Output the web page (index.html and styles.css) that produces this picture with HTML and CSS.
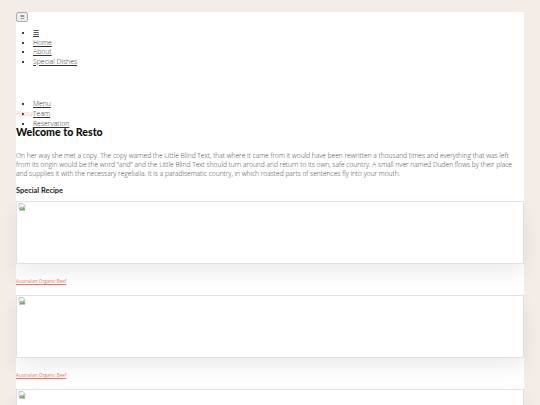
FILE: index.html
```html
<!DOCTYPE html>
<html lang="en">
  <head>
    <meta charset="UTF-8" />
    <meta name="viewport" content="width=device-width, initial-scale=1.0" />
    <title>Resto</title>
    <link rel="stylesheet" href="styles.css">
  </head>
  <body>
    <div class="container">
      <button class="toggler" type="button">&#9776;</button>
      <ul class="nav">
        <li><a href="#">&#9776;</a></li>
        <li><a href="#">Home</a></li>
        <li><a href="#">About</a></li>
        <li><a href="#">Special Dishes</a></li>
      </ul>

      <div class="nav-lower">
        <ul class="nav">
          <li><a href="#">Menu</a></li>
          <li><a href="#">Team</a></li>
          <li><a href="#">Reservation</a></li>
        </ul>
        <span class="crumb">About</span>
      </div>

      <h1>Welcome to Resto</h1>
      <p class="intro">
        On her way she met a copy. The copy warned the Little Blind Text, that where it came from it would have been rewritten a thousand times and everything that was left from its origin would be the word "and" and the Little Blind Text should turn around and return to its own, safe country. A small river named Duden flows by their place and supplies it with the necessary regelialia. It is a paradisematic country, in which roasted parts of sentences fly into your mouth.
      </p>

      <h2>Special Recipe</h2>

      <div class="recipe">
        <div class="photo">
          <svg class="broken" width="8" height="8" viewBox="0 0 16 16">
            <path d="M2 1h8l4 4v4l-3 -2 -3 3 -2 -2 -4 4z" fill="#f1f1f1" stroke="#9a9a9a" stroke-width="1"/>
            <path d="M2 14l4 -4 2 2 3 -3 3 2v4H2z" fill="#6fae5b"/>
            <path d="M4 12l3 -3 2 2 4 -4" fill="none" stroke="#4a7fc0" stroke-width="1"/>
          </svg>
        </div>
        <a class="dish" href="#">Australian Organic Beef</a>
      </div>

      <div class="recipe">
        <div class="photo">
          <svg class="broken" width="8" height="8" viewBox="0 0 16 16">
            <path d="M2 1h8l4 4v4l-3 -2 -3 3 -2 -2 -4 4z" fill="#f1f1f1" stroke="#9a9a9a" stroke-width="1"/>
            <path d="M2 14l4 -4 2 2 3 -3 3 2v4H2z" fill="#6fae5b"/>
            <path d="M4 12l3 -3 2 2 4 -4" fill="none" stroke="#4a7fc0" stroke-width="1"/>
          </svg>
        </div>
        <a class="dish" href="#">Australian Organic Beef</a>
      </div>

      <div class="recipe">
        <div class="photo">
          <svg class="broken" width="8" height="8" viewBox="0 0 16 16">
            <path d="M2 1h8l4 4v4l-3 -2 -3 3 -2 -2 -4 4z" fill="#f1f1f1" stroke="#9a9a9a" stroke-width="1"/>
            <path d="M2 14l4 -4 2 2 3 -3 3 2v4H2z" fill="#6fae5b"/>
            <path d="M4 12l3 -3 2 2 4 -4" fill="none" stroke="#4a7fc0" stroke-width="1"/>
          </svg>
        </div>
      </div>
    </div>
  </body>
</html>
```

FILE: styles.css
```css
body {
  font-family: "Open Sans", sans-serif;
  background-color: #f4ece7;
  margin: 0;
  padding: 0;
  overflow: hidden;
}

.container {
  margin: 12px 16px 0;
  background-color: #fff;
  min-height: 420px;
}

.toggler {
  display: block;
  width: 12px;
  height: 10px;
  margin: 1px 0 0;
  padding: 0;
  font-size: 5px;
  line-height: 8px;
  color: #555;
  background-color: #efefef;
  border: 1px solid #aaa;
  border-radius: 2px;
}

.nav {
  margin: 6px 0 0;
  padding-left: 17px;
  font-size: 6.9px;
  font-weight: 300;
  line-height: 9.6px;
}

.nav a {
  color: #333;
}

.nav-lower {
  position: relative;
  margin-top: 33px;
}

.nav-lower .nav {
  margin: 0;
}

.crumb {
  position: absolute;
  left: 0;
  top: 10px;
  font-size: 6.9px;
  font-weight: 300;
  line-height: 9px;
  color: #f0968a;
}

h1 {
  font-family: "Lato", sans-serif;
  font-weight: 900;
  font-size: 10.6px;
  color: #111;
  margin: -2px 0 0;
  line-height: 13px;
}

.intro {
  margin: 12px 0 0;
  padding-right: 10px;
  font-size: 6.65px;
  font-weight: 300;
  line-height: 9.1px;
  color: #444;
}

h2 {
  font-family: "Lato", sans-serif;
  font-weight: 700;
  font-size: 7.4px;
  color: #222;
  margin: 8px 0 0;
  line-height: 10px;
}

.recipe {
  margin-top: 5px;
}

.recipe + .recipe {
  margin-top: 11px;
}

.photo {
  height: 61px;
  border: 1px solid #e1e1e1;
  box-shadow: 0 10px 18px rgba(0, 0, 0, 0.07);
}

.broken {
  display: block;
  margin: 1px 0 0 1px;
}

.dish {
  display: block;
  margin-top: 14px;
  font-size: 4.6px;
  line-height: 6px;
  color: #e9776a;
}
```
